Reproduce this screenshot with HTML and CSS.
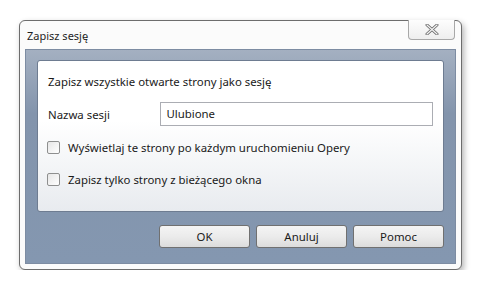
FILE: index.html
```html
<!DOCTYPE html>
<html lang="pl">
<head>
    <meta charset="UTF-8">
    <title>Zapisz sesję</title>
    <link rel="stylesheet" href="styles.css">
</head>
<body>
    <div class="window">
        <div class="title-bar">
            <span class="title">Zapisz sesję</span>
            <div class="close-btn">
                <svg width="14" height="11" viewBox="0 0 14 11">
                    <path d="M2 1 L12 10 M12 1 L2 10" stroke="#6a6a6a" stroke-width="3" stroke-linecap="round"/>
                    <path d="M2 1 L12 10 M12 1 L2 10" stroke="#f4f4f4" stroke-width="1.2" stroke-linecap="round"/>
                </svg>
            </div>
        </div>

        <div class="client">
            <div class="panel">
                <div class="heading">Zapisz wszystkie otwarte strony jako sesję</div>

                <div class="field-row">
                    <label class="field-label">Nazwa sesji</label>
                    <div class="text-input">Ulubione</div>
                </div>

                <div class="check-row">
                    <span class="checkbox"></span>
                    <span>Wyświetlaj te strony po każdym uruchomieniu Opery</span>
                </div>

                <div class="check-row last">
                    <span class="checkbox"></span>
                    <span>Zapisz tylko strony z bieżącego okna</span>
                </div>
            </div>

            <div class="buttons">
                <button class="btn">OK</button>
                <button class="btn">Anuluj</button>
                <button class="btn">Pomoc</button>
            </div>
        </div>
    </div>
</body>
</html>
```

FILE: styles.css
```css
* {
    box-sizing: border-box;
}

body {
    margin: 0;
    background: #fff;
    font-family: "Noto Sans", "Open Sans", sans-serif;
    font-size: 11.4px;
    color: #1a1a1a;
}

/* okno dialogowe */
.window {
    position: relative;
    margin: 20px 0 0 19px;
    width: 443px;
    height: 250px;
    border: 1px solid #6d6d6d;
    border-radius: 6px;
    background: #fbfbfb;
    box-shadow: 2px 3px 6px rgba(0, 0, 0, 0.3);
    padding: 0 5px;
}

.title-bar {
    height: 28px;
    display: flex;
    align-items: center;
}

.title {
    margin-left: 2px;
    font-size: 11px;
    color: #1e1e1e;
}

.close-btn {
    position: absolute;
    top: -1px;
    right: 6px;
    width: 47px;
    height: 20px;
    border: 1px solid #a8a8a8;
    border-top: none;
    border-radius: 0 0 4px 4px;
    background: linear-gradient(#fdfdfd, #eeeeee);
    display: flex;
    align-items: center;
    justify-content: center;
}

.client {
    height: 215px;
    border: 1px solid #7d8ca2;
    background: linear-gradient(#a4b0c1, #8394ac 30%, #8497b0);
    padding: 0 11px;
}

.panel {
    margin-top: 10px;
    height: 152px;
    padding: 11px 10px 0;
    border: 1px solid #6e7c91;
    border-radius: 3px;
    background: linear-gradient(#ffffff, #ffffff 40%, #e8ebef);
}

.heading {
    height: 20px;
    line-height: 20px;
}

.field-row {
    display: flex;
    align-items: center;
    margin-top: 10px;
    height: 24px;
}

.field-label {
    width: 113px;
}

.text-input {
    width: 274px;
    height: 24px;
    line-height: 22px;
    padding-left: 5px;
    border: 1px solid #abadb3;
    background: #fff;
}

.check-row {
    display: flex;
    align-items: center;
    gap: 8px;
    height: 20px;
    margin-top: 11px;
}

.check-row.last {
    margin-top: 12px;
}

.checkbox {
    width: 13px;
    height: 13px;
    margin-left: -1px;
    border: 1px solid #8e8f8f;
    border-radius: 2px;
    background: linear-gradient(135deg, #e6e6e6, #ffffff);
}

.buttons {
    display: flex;
    justify-content: flex-end;
    gap: 6px;
    margin-top: 13px;
}

.btn {
    width: 91px;
    height: 23px;
    border: 1px solid #707070;
    border-radius: 3px;
    background: linear-gradient(#f4f4f4, #ebebeb 50%, #dcdcdc);
    font-family: inherit;
    font-size: 11.4px;
    color: #1a1a1a;
    padding: 0;
}
```
